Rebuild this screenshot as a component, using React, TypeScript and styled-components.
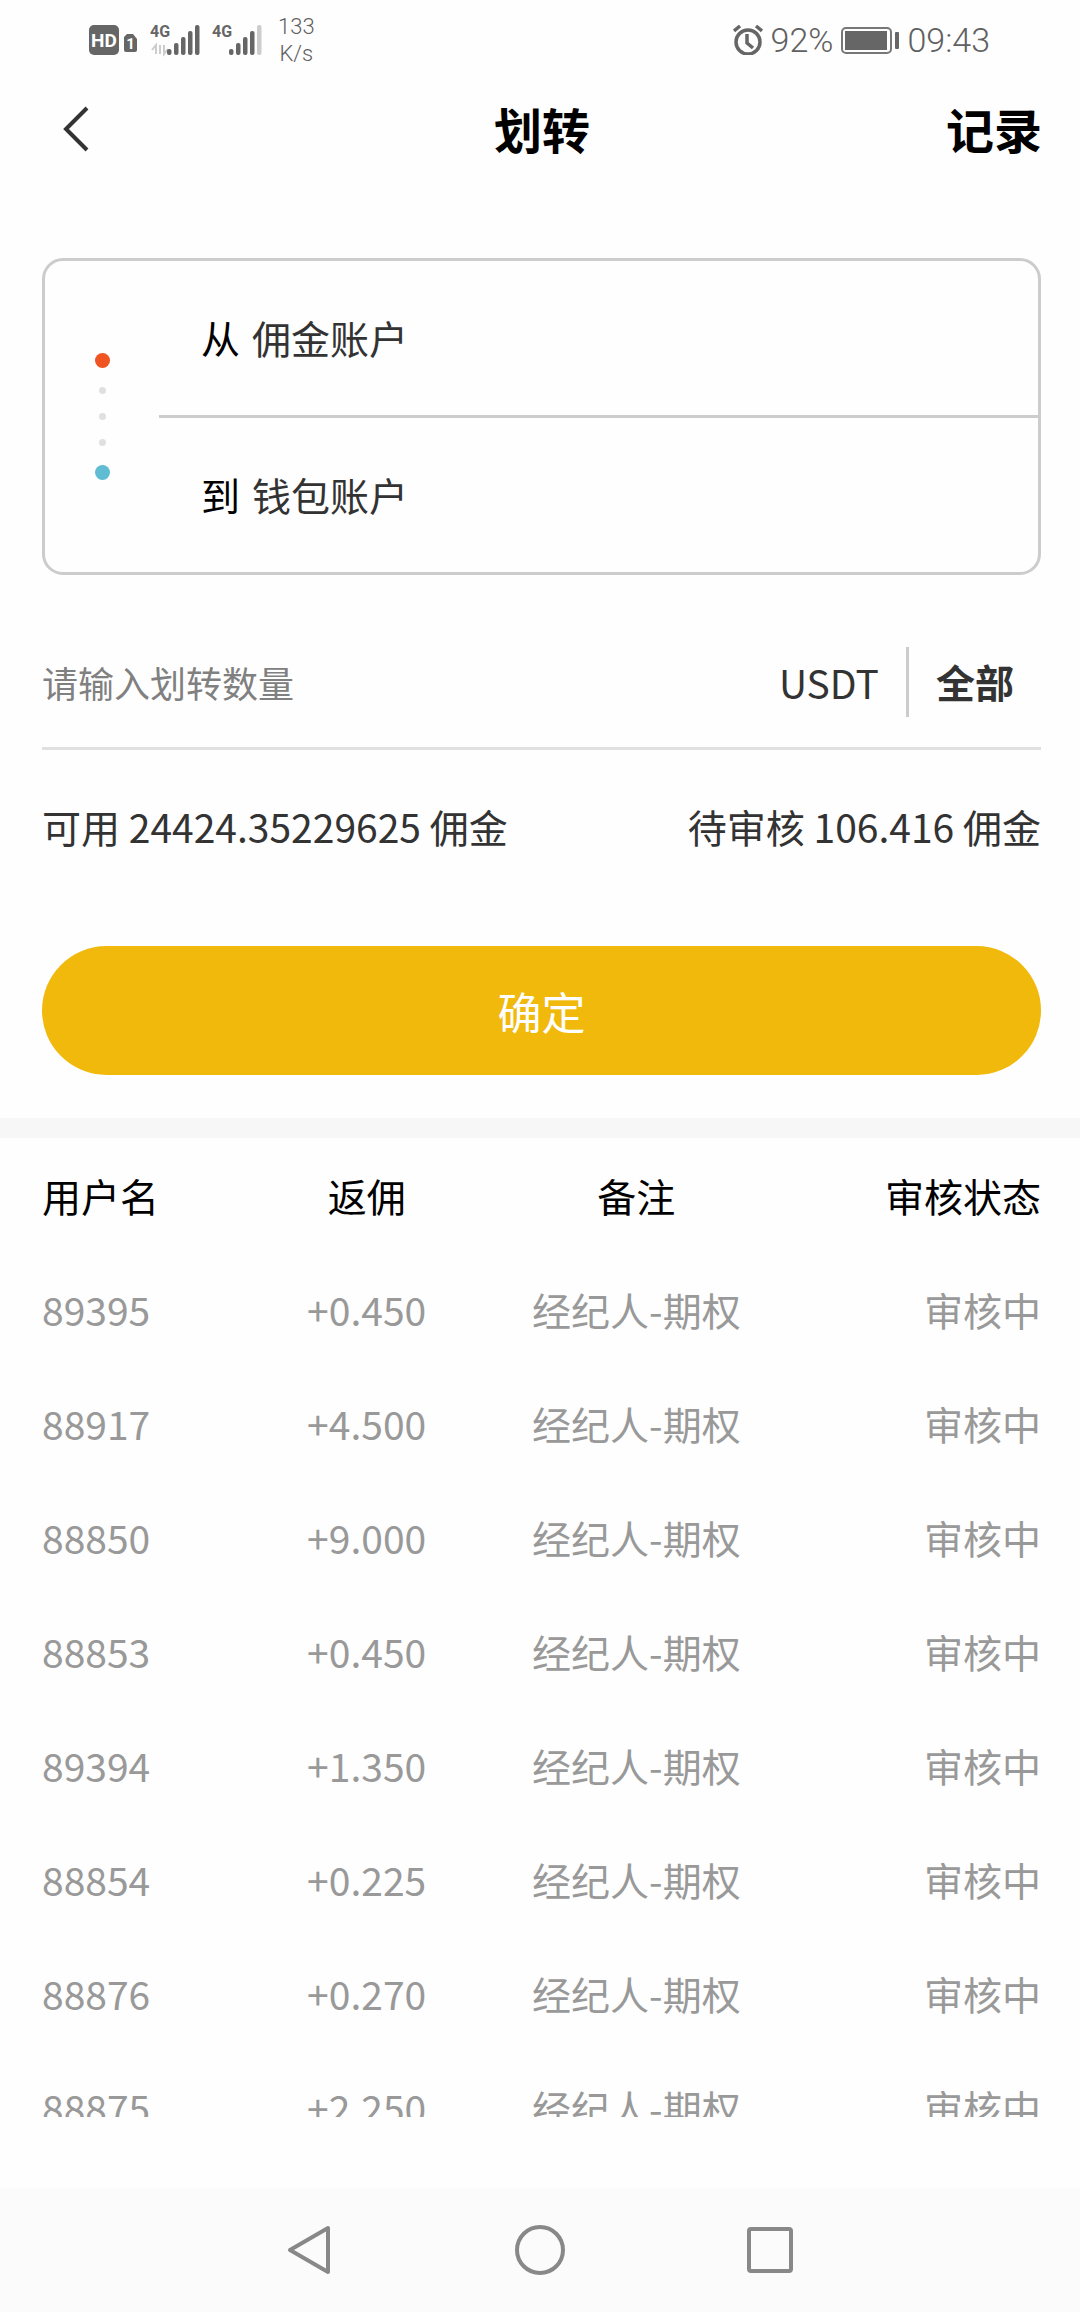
import React, { useState } from 'react';
import styled, { createGlobalStyle } from 'styled-components';

const CJK = '"Noto Sans CJK SC", "Noto Sans", sans-serif';

const GlobalStyle = createGlobalStyle`
  *, *::before, *::after { box-sizing: border-box; }
  body { margin: 0; background: #fefefe; font-family: ${CJK}; color: #000; }
  button, input { font: inherit; color: inherit; background: none; border: 0; padding: 0; margin: 0; }
  button { cursor: pointer; }
`;

const Screen = styled.div`
  display: flex;
  flex-direction: column;
  height: 100vh;
`;

const StatusBar = styled.div`
  display: flex;
  align-items: center;
  justify-content: space-between;
  height: 80px;
  padding: 0 90px 0 89px;
  color: #606060;
  font-family: Roboto, sans-serif;
  font-size: 34px;
  font-weight: 300;
`;

const StatusGroup = styled.div<{ $gap: number }>`
  display: flex;
  align-items: center;
  gap: ${(p) => p.$gap}px;
`;

const Speed = styled.span`
  margin-left: 4px;
  font-size: 22px;
  line-height: 27px;
  text-align: center;
`;

const Header = styled.header`
  display: grid;
  grid-template-columns: 1fr auto 1fr;
  align-items: center;
  height: 96px;
  padding: 0 38px 0 42px;
`;

const Title = styled.h1`
  margin: 0;
  font-size: 48px;
  line-height: 72px;
  font-weight: 700;
`;

const BackButton = styled.button`
  justify-self: start;
  display: flex;
  padding: 2px 20px 0;
`;

const HeaderAction = styled.button`
  justify-self: end;
  font-size: 48px;
  line-height: 72px;
  font-weight: 700;
`;

const Form = styled.form`
  display: flex;
  flex-direction: column;
  padding: 82px 39px 43px 42px;
`;

const AccountCard = styled.section`
  display: grid;
  grid-template-columns: 114px 1fr;
  border: 3px solid #ccc;
  border-radius: 21px;
`;

const Route = styled.div`
  display: flex;
  flex-direction: column;
  align-items: center;
  justify-content: center;
  gap: 19px;
`;

const Dot = styled.span<{ $size: number; $color: string }>`
  width: ${(p) => p.$size}px;
  height: ${(p) => p.$size}px;
  border-radius: 50%;
  background: ${(p) => p.$color};
`;

const Accounts = styled.div`
  display: flex;
  flex-direction: column;
`;

const AccountRow = styled.div`
  display: flex;
  align-items: center;
  gap: 12px;
  height: 154px;
  padding: 0 0 3px 42px;
  font-size: 39px;
  line-height: 60px;

  & + & {
    height: 157px;
    border-top: 3px solid #ccc;
  }
`;

const AccountName = styled.span`
  color: #333;
`;

const AmountRow = styled.div`
  display: flex;
  align-items: center;
  margin-top: 42px;
  padding: 30px 27px 30px 0;
  border-bottom: 3px solid #e0e0e0;
  color: #333;
  font-size: 39px;
  line-height: 60px;
`;

const AmountInput = styled.input`
  flex: 1;
  min-width: 0;
  height: 60px;
  font-size: 36px;
  outline: none;

  &::placeholder {
    color: #808080;
    opacity: 1;
  }
`;

const AllButton = styled.button`
  height: 70px;
  margin-left: 27px;
  padding: 0 0 2px 27px;
  border-left: 3px solid #ccc;
  font-weight: 700;
`;

const Balances = styled.div`
  display: flex;
  justify-content: space-between;
  margin-top: 46px;
  color: #333;
  font-size: 39px;
  line-height: 60px;
`;

const Submit = styled.button`
  height: 129px;
  margin-top: 90px;
  border-radius: 65px;
  background: #f0b90b;
  color: #fff;
  font-size: 44px;
`;

const Records = styled.section`
  flex: 1;
  min-height: 0;
  margin-bottom: 71px;
  padding: 0 39px 0 42px;
  border-top: 20px solid #f7f7f7;
  overflow-y: auto;
  scrollbar-width: none;
`;

const Table = styled.table`
  width: 100%;
  table-layout: fixed;
  border-collapse: collapse;
  font-size: 39px;
  line-height: 60px;
  color: #999;

  th, td {
    height: 114px;
    padding: 0;
    font-weight: 400;
    text-align: center;
    white-space: nowrap;
  }
  th { width: 27%; color: #000; }
  th:first-child { width: 19%; }
  th:first-child, td:first-child { text-align: left; }
  th:last-child, td:last-child { text-align: right; }
`;

const NavBar = styled.nav`
  display: flex;
  justify-content: center;
  height: 124px;
  background: #fbfbfb;
`;

const NavButton = styled.button`
  display: flex;
  align-items: center;
  justify-content: center;
  width: 230px;
`;

const HdBadge = () => (
  <svg width="49" height="30" viewBox="0 0 49 30" fill="#666" fontFamily="Roboto, sans-serif" fontWeight="700">
    <rect width="30" height="30" rx="5" />
    <text x="15" y="22" fontSize="19" fill="#fff" textAnchor="middle">HD</text>
    <path d="M38 9h6l4 5v11a2 2 0 0 1-2 2h-9a2 2 0 0 1-2-2V12z" />
    <text x="41.500" y="24" fontSize="15" fill="#fff" textAnchor="middle">1</text>
  </svg>
);

const BARS = [6, 12, 18, 24, 30];

const Signal = ({ level, data }: { level: number; data?: boolean }) => (
  <svg width="50" height="40" viewBox="0 -5 50 40" fill="#666">
    <text x="0" y="12" fontSize="16" fontWeight="700" fontFamily="Roboto, sans-serif">4G</text>
    {data && (
      <path d="M6 29V20l-4 5M10 20v9M14 20v9l4-5" fill="none" stroke="#ccc" strokeWidth="2" />
    )}
    {BARS.map((h, i) => (
      <rect key={h} x={17 + i * 7} y={30 - h} width="4.500" height={h} rx="2" fill={i < level ? '#666' : '#ccc'} />
    ))}
  </svg>
);

const AlarmIcon = () => (
  <svg width="30" height="30" viewBox="0 0 30 30" fill="none" stroke="#666" strokeWidth="3.500">
    <circle cx="15" cy="17" r="12" />
    <path d="M14 9v9l6 5M1 6l6-5M29 6l-6-5" />
  </svg>
);

const BatteryIcon = () => (
  <svg width="58" height="27" viewBox="0 0 58 27" fill="#666">
    <rect x="1" y="1" width="49" height="25" rx="4" fill="none" stroke="#777" strokeWidth="2" />
    <rect x="4" y="4" width="42" height="19" />
    <rect x="54" y="5" width="4" height="17" rx="1" />
  </svg>
);

const RECORDS = [
  ['89395', '+0.450'],
  ['88917', '+4.500'],
  ['88850', '+9.000'],
  ['88853', '+0.450'],
  ['89394', '+1.350'],
  ['88854', '+0.225'],
  ['88876', '+0.270'],
  ['88875', '+2.250'],
];

export default function App() {
  const [amount, setAmount] = useState('');

  return (
    <Screen>
      <GlobalStyle />
      <StatusBar>
        <StatusGroup $gap={12}>
          <HdBadge />
          <Signal level={5} data />
          <Signal level={4} />
          <Speed>133<br />K/s</Speed>
        </StatusGroup>
        <StatusGroup $gap={8}>
          <AlarmIcon />
          <span>92%</span>
          <BatteryIcon />
          <span>09:43</span>
        </StatusGroup>
      </StatusBar>

      <Header>
        <BackButton type="button" aria-label="返回">
          <svg width="28" height="46" viewBox="0 0 28 46" fill="none" stroke="#333" strokeWidth="4">
            <path d="M25 2L4 23l21 21" />
          </svg>
        </BackButton>
        <Title>划转</Title>
        <HeaderAction type="button">记录</HeaderAction>
      </Header>

      <Form onSubmit={(e) => e.preventDefault()}>
        <AccountCard>
          <Route>
            <Dot $size={15} $color="#f05423" />
            <Dot $size={7} $color="#e0e0e0" />
            <Dot $size={7} $color="#e0e0e0" />
            <Dot $size={7} $color="#e0e0e0" />
            <Dot $size={15} $color="#5fbcd3" />
          </Route>
          <Accounts>
            <AccountRow>
              <span>从</span>
              <AccountName>佣金账户</AccountName>
            </AccountRow>
            <AccountRow>
              <span>到</span>
              <AccountName>钱包账户</AccountName>
            </AccountRow>
          </Accounts>
        </AccountCard>

        <AmountRow>
          <AmountInput
            aria-label="请输入划转数量"
            placeholder="请输入划转数量"
            inputMode="decimal"
            value={amount}
            onChange={(e) => setAmount(e.target.value)}
          />
          <span>USDT</span>
          <AllButton type="button" onClick={() => setAmount('24424.35229625')}>全部</AllButton>
        </AmountRow>

        <Balances>
          <span>可用 24424.35229625 佣金</span>
          <span>待审核 106.416 佣金</span>
        </Balances>

        <Submit type="submit">确定</Submit>
      </Form>

      <Records>
        <Table>
          <thead>
            <tr>
              <th scope="col">用户名</th>
              <th scope="col">返佣</th>
              <th scope="col">备注</th>
              <th scope="col">审核状态</th>
            </tr>
          </thead>
          <tbody>
            {RECORDS.map(([user, rebate]) => (
              <tr key={user}>
                <td>{user}</td>
                <td>{rebate}</td>
                <td>经纪人-期权</td>
                <td>审核中</td>
              </tr>
            ))}
          </tbody>
        </Table>
      </Records>

      <NavBar>
        <NavButton type="button" aria-label="后退">
          <svg width="46" height="50" viewBox="0 0 46 50" fill="none" stroke="#888" strokeWidth="4" strokeLinejoin="round">
            <path d="M41 3v44L3 25z" />
          </svg>
        </NavButton>
        <NavButton type="button" aria-label="主页">
          <svg width="50" height="50" viewBox="0 0 50 50" fill="none" stroke="#888" strokeWidth="4">
            <circle cx="25" cy="25" r="23" />
          </svg>
        </NavButton>
        <NavButton type="button" aria-label="最近任务">
          <svg width="46" height="46" viewBox="0 0 46 46" fill="none" stroke="#888" strokeWidth="4">
            <rect x="2" y="2" width="42" height="42" rx="2" />
          </svg>
        </NavButton>
      </NavBar>
    </Screen>
  );
}
